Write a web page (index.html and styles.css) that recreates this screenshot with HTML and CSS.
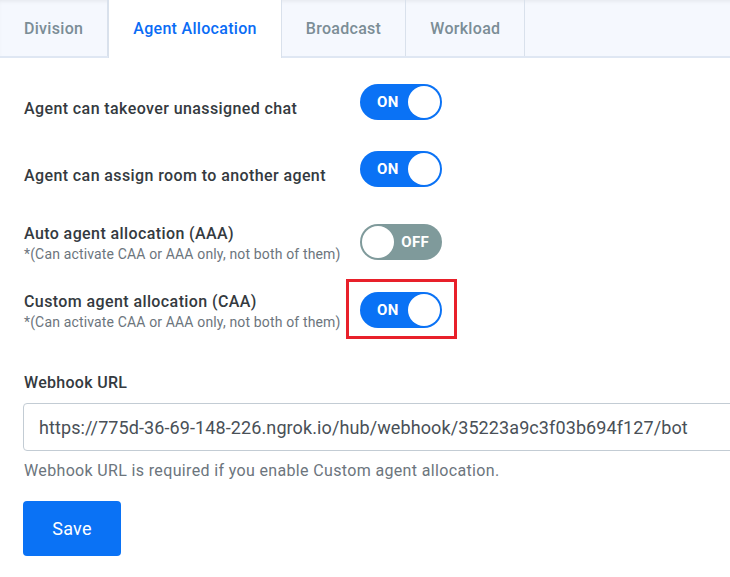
FILE: index.html
```html
<!DOCTYPE html>
<html lang="en">
<head>
    <meta charset="UTF-8">
    <meta name="viewport" content="width=device-width, initial-scale=1.0">
    <title>Agent Allocation</title>
    <link rel="stylesheet" href="styles.css">
</head>
<body>
    <!-- Tabs -->
    <nav class="tabs">
        <a href="#" class="tab">Division</a>
        <a href="#" class="tab active">Agent Allocation</a>
        <a href="#" class="tab">Broadcast</a>
        <a href="#" class="tab">Workload</a>
    </nav>

    <!-- Settings -->
    <section class="settings">
        <div class="setting-row row-1">
            <div class="setting-label single">Agent can takeover unassigned chat</div>
            <div class="toggle on"><span class="toggle-text">ON</span><span class="knob"></span></div>
        </div>

        <div class="setting-row row-2">
            <div class="setting-label single">Agent can assign room to another agent</div>
            <div class="toggle on"><span class="toggle-text">ON</span><span class="knob"></span></div>
        </div>

        <div class="setting-row row-3">
            <div class="setting-label">
                Auto agent allocation (AAA)
                <small>*(Can activate CAA or AAA only, not both of them)</small>
            </div>
            <div class="toggle off"><span class="toggle-text">OFF</span><span class="knob"></span></div>
        </div>

        <div class="setting-row row-4">
            <div class="setting-label">
                Custom agent allocation (CAA)
                <small>*(Can activate CAA or AAA only, not both of them)</small>
            </div>
            <div class="toggle-wrap highlighted">
                <div class="toggle on"><span class="toggle-text">ON</span><span class="knob"></span></div>
            </div>
        </div>

        <div class="form-group">
            <label for="webhook">Webhook URL</label>
            <input type="text" id="webhook" value="https://775d-36-69-148-226.ngrok.io/hub/webhook/35223a9c3f03b694f127/bot">
            <p class="help-text">Webhook URL is required if you enable Custom agent allocation.</p>
        </div>

        <button type="button" class="btn-save">Save</button>
    </section>
</body>
</html>
```

FILE: styles.css
```css
/* Reset */
* {
    margin: 0;
    padding: 0;
    box-sizing: border-box;
    font-family: Roboto, "Liberation Sans", sans-serif;
}

body {
    background-color: #ffffff;
    color: #343a40;
    width: 760px;
    overflow: hidden;
}

/* Tabs */
.tabs {
    display: flex;
    height: 58px;
    background-color: #f5f8fe;
    border-bottom: 2px solid #dfe7f3;
    box-shadow: inset 0 3px 4px -2px rgba(0, 0, 0, 0.08);
}

.tab {
    display: flex;
    align-items: center;
    padding: 0 24px;
    border-right: 1px solid #d9e1ec;
    font-size: 16px;
    font-weight: 500;
    letter-spacing: 0.3px;
    color: #7b8d96;
    text-decoration: none;
}

.tab.active {
    background-color: #ffffff;
    color: #0a6cf5;
    margin-bottom: -2px;
    padding-bottom: 2px;
    border-left: 1px solid #d9e1ec;
}

/* Setting rows */
.settings {
    padding: 26px 24px 0;
}

.setting-row {
    display: flex;
    align-items: flex-start;
}

.row-1 { margin-bottom: 31px; }
.row-2 { margin-bottom: 37px; }
.row-3 { margin-bottom: 28px; }
.row-4 { margin-bottom: 41px; }

.setting-label {
    width: 336px;
    font-size: 16px;
    font-weight: 500;
    line-height: 20px;
    letter-spacing: 0.4px;
    color: #343a40;
}

.setting-label.single {
    padding-top: 15px;
}

.setting-label small {
    display: block;
    font-size: 14px;
    font-weight: 400;
    letter-spacing: 0.15px;
    color: #6c757d;
}

/* Toggle */
.toggle {
    display: flex;
    align-items: center;
    justify-content: space-between;
    width: 82px;
    height: 36px;
    border-radius: 18px;
}

.toggle.on {
    background-color: #0a72f5;
    padding: 0 2px 0 17px;
}

.toggle.off {
    background-color: #7f9a9b;
    flex-direction: row-reverse;
    padding: 0 13px 0 2px;
}

.toggle-text {
    color: #ffffff;
    font-size: 15px;
    font-weight: 700;
    letter-spacing: 0.3px;
    padding-bottom: 1px;
}

.knob {
    width: 32px;
    height: 32px;
    border-radius: 50%;
    background-color: #ffffff;
}

.toggle-wrap {
    position: relative;
}

.toggle-wrap.highlighted::after {
    content: "";
    position: absolute;
    top: -13px;
    left: -14px;
    right: -15px;
    bottom: -11px;
    border: 3px solid #e8202a;
}

/* Webhook field */
.form-group label {
    display: block;
    font-size: 16px;
    font-weight: 500;
    letter-spacing: 0.3px;
    color: #343a40;
    margin-bottom: 11px;
}

.form-group input {
    width: 760px;
    height: 48px;
    margin-left: -1px;
    padding: 0 15px;
    border: 1px solid #c3ccd4;
    border-radius: 4px;
    font-size: 18px;
    letter-spacing: 0.1px;
    color: #495057;
}

.help-text {
    margin-top: 10px;
    font-size: 16px;
    letter-spacing: 0.35px;
    color: #6c757d;
}

/* Save */
.btn-save {
    margin-top: 21px;
    margin-left: -1px;
    width: 98px;
    height: 55px;
    background-color: #0a72f5;
    color: #ffffff;
    border: none;
    border-radius: 4px;
    font-size: 18px;
    letter-spacing: 0.3px;
    cursor: pointer;
}
```
